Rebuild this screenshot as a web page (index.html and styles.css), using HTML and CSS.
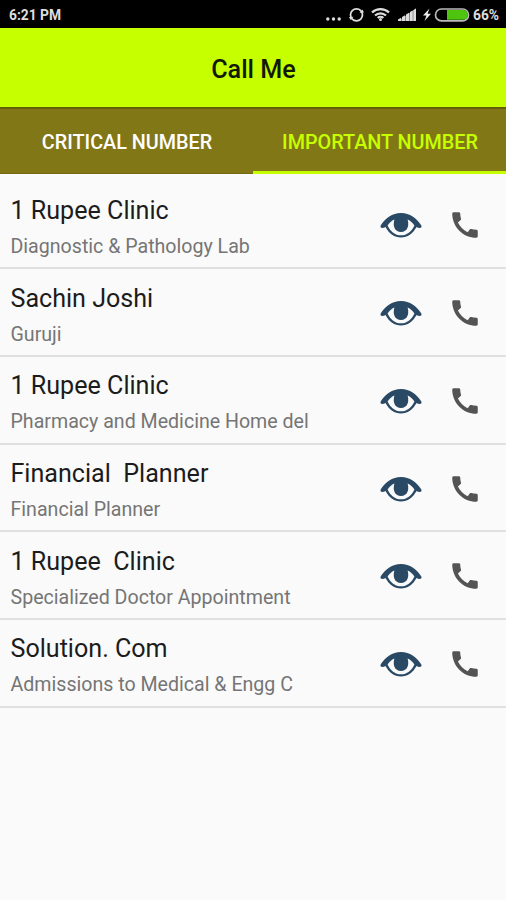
FILE: index.html
```html
<!DOCTYPE html>
<html lang="en">

<head>
  <meta charset="UTF-8">
  <meta name="viewport" content="width=device-width, initial-scale=1.0">
  <title>Call Me</title>
  <link rel="stylesheet" href="styles.css">
</head>

<body>
  <!-- shared icons -->
  <svg class="sprite" width="0" height="0">
    <symbol id="eye" viewBox="0 0 42 26">
      <path fill="#2a4964" d="M2.200 16C.6 16-.1 14.300 1 13 5.500 6 12 1 21 1S36.500 6 41 13c1.100 1.300.4 3-1.200 3-1.200 0-2.300-.4-3.300-1C33 21.500 27.500 25.500 21 25.500S9 21.500 5.500 15C4.500 15.600 3.400 16 2.200 16z" />
      <path fill="#fafafa" d="M7.600 13.400C9.500 10.700 11.500 9 14.400 7.600C12.600 14 14.500 20 21 20s8.400-6 6.600-12.400c2.900 1.400 4.900 3.100 6.800 5.800C31.500 19.700 27 23.200 21 23.200S10.500 19.700 7.600 13.400z" />
    </symbol>
    <symbol id="phone" viewBox="0 0 24 24">
      <path fill="#545454" d="M20.010 15.380c-1.230 0-2.420-.2-3.530-.56-.35-.12-.74-.03-1.010.24l-1.570 1.970c-2.830-1.350-5.480-3.900-6.890-6.830l1.950-1.660c.27-.28.35-.67.24-1.020-.37-1.110-.56-2.300-.56-3.530 0-.54-.45-.99-.99-.99H4.190C3.650 3 3 3.240 3 3.990 3 13.280 10.730 21 20.010 21c.71 0 .99-.63.99-1.180v-3.450c0-.54-.45-.99-.99-.99z" />
    </symbol>
  </svg>

  <div class="status">
    <span class="time">6:21 PM</span>
    <svg class="status-icons" width="147" height="28" viewBox="0 0 147 28">
      <g fill="#ddd">
        <circle cx="2.800" cy="19" r="1.700" />
        <circle cx="8.500" cy="19" r="1.700" />
        <circle cx="14.200" cy="19" r="1.700" />
      </g>
      <circle cx="31.500" cy="14.800" r="6" fill="none" stroke="#ddd" stroke-width="1.800" />
      <path fill="#ddd" d="M24 17l4.500-.2-2.900 3.200zM39 12.500l-4.500.2 2.900-3.200z" />
      <g fill="none" stroke="#ddd" stroke-width="2.300">
        <path d="M47 12.500a12.500 12.500 0 0 1 17 0" />
        <path d="M50 15.500a8 8 0 0 1 11 0" />
        <path d="M52.700 18a4 4 0 0 1 5.600 0" />
      </g>
      <circle cx="55.500" cy="19.500" r="1.500" fill="#ddd" />
      <path fill="#888" d="M73 21L91 8.500V21z" />
      <path fill="#ddd" d="M73 21v-1.500l3-1.800V21zM77 21v-4l3-1.800V21zM81 21v-6.400l3-1.900V21zM85 21v-8.900l2.600-1.700V21zM88.500 21V9.900L91 8.500V21z" />
      <path fill="#eee" d="M104.500 8.500l-6.500 7h3.500l-2 5.500 6.500-7.200h-3.500z" />
      <rect x="110.500" y="9" width="33" height="11.800" rx="5.900" fill="#000" stroke="#bbb" stroke-width="1.700" />
      <path fill="#4fc40f" d="M122 10h16a4.900 4.900 0 0 1 0 9.800h-16z" />
    </svg>
    <span class="percent">66%</span>
  </div>

  <div class="header">Call Me</div>

  <div class="tabs">
    <div class="tab">CRITICAL NUMBER</div>
    <div class="tab active">IMPORTANT NUMBER</div>
  </div>

  <div class="list">
    <div class="item">
      <div class="info">
        <div class="name">1 Rupee Clinic</div>
        <div class="desc">Diagnostic &amp; Pathology Lab</div>
      </div>
      <svg class="eye"><use href="#eye" /></svg>
      <svg class="phone"><use href="#phone" /></svg>
    </div>
    <div class="item">
      <div class="info">
        <div class="name">Sachin Joshi</div>
        <div class="desc">Guruji</div>
      </div>
      <svg class="eye"><use href="#eye" /></svg>
      <svg class="phone"><use href="#phone" /></svg>
    </div>
    <div class="item">
      <div class="info">
        <div class="name">1 Rupee Clinic</div>
        <div class="desc">Pharmacy and Medicine Home del</div>
      </div>
      <svg class="eye"><use href="#eye" /></svg>
      <svg class="phone"><use href="#phone" /></svg>
    </div>
    <div class="item">
      <div class="info">
        <div class="name">Financial  Planner</div>
        <div class="desc">Financial Planner</div>
      </div>
      <svg class="eye"><use href="#eye" /></svg>
      <svg class="phone"><use href="#phone" /></svg>
    </div>
    <div class="item">
      <div class="info">
        <div class="name">1 Rupee  Clinic</div>
        <div class="desc">Specialized Doctor Appointment</div>
      </div>
      <svg class="eye"><use href="#eye" /></svg>
      <svg class="phone"><use href="#phone" /></svg>
    </div>
    <div class="item">
      <div class="info">
        <div class="name">Solution. Com</div>
        <div class="desc">Admissions to Medical &amp; Engg C</div>
      </div>
      <svg class="eye"><use href="#eye" /></svg>
      <svg class="phone"><use href="#phone" /></svg>
    </div>
  </div>
</body>

</html>
```
FILE: styles.css
```css
* {
  box-sizing: border-box;
}

body {
  margin: 0;
  min-height: 900px;
  background: #fafafa;
  font-family: Roboto, "Liberation Sans", sans-serif;
}

.sprite {
  display: block;
}

.status {
  display: flex;
  align-items: center;
  height: 28px;
  padding: 0 8px 0 9px;
  background: #000;
  color: #ddd;
  font-size: 13.8px;
  font-weight: 700;
}

.time {
  flex: 1;
  padding-top: 2px;
}

.percent {
  width: 25px;
  padding-top: 2px;
  margin-left: 1px;
  white-space: nowrap;
}

.header {
  height: 79px;
  padding: 2px 0 0 1px;
  background: #c6ff00;
  color: #111a00;
  font-size: 25.2px;
  font-weight: 500;
  line-height: 79px;
  text-align: center;
}

.tabs {
  display: flex;
  height: 67px;
  border-top: 2px solid #665c0e;
  background: #827717;
}

.tab {
  flex: 1;
  border-bottom: 1px solid #73690f;
  padding-left: 1px;
  color: #fff;
  font-size: 19.8px;
  font-weight: 500;
  line-height: 67px;
  text-align: center;
  white-space: nowrap;
}

.active {
  border-bottom: 3px solid #c6ff00;
  color: #c6ff00;
}

.list {
  padding-top: 7.6px;
}

.item {
  display: flex;
  align-items: center;
  height: 87.7px;
  padding: 2px 24px 0 10.5px;
  border-bottom: 2px solid #e0e0e0;
}

.info {
  flex: 1;
  padding-top: 7px;
}

.name {
  color: #1c1c1c;
  font-size: 25.1px;
  line-height: 36px;
  white-space: pre;
}

.desc {
  color: #757575;
  font-size: 19.6px;
  line-height: 36px;
  white-space: nowrap;
}

.eye {
  width: 42px;
  height: 26px;
}

.phone {
  width: 34px;
  height: 34px;
  margin-left: 26px;
}
```
